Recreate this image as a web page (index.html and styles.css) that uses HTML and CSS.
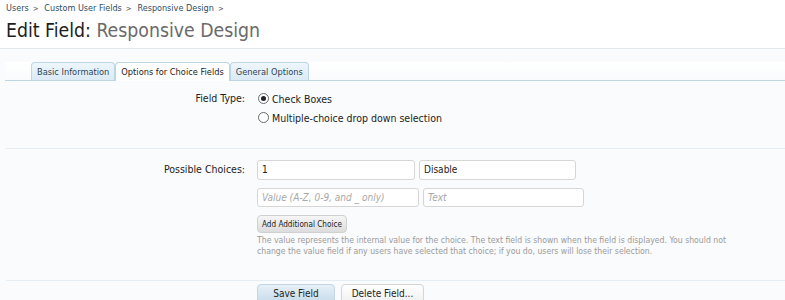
FILE: index.html
```html
<!DOCTYPE html>
<html>
<head>
<meta charset="utf-8">
<link rel="stylesheet" href="styles.css">
</head>
<body>
<div class="crumbs">
  <a href="#">Users</a><span class="sep">&gt;</span><a href="#">Custom User Fields</a><span class="sep">&gt;</span><a href="#">Responsive Design</a><span class="sep">&gt;</span>
</div>
<h1 class="title"><span class="t-main">Edit Field:</span> <span class="t-sub">Responsive Design</span></h1>
<div class="tabs">
  <div class="tab">Basic Information</div>
  <div class="tab active">Options for Choice Fields</div>
  <div class="tab">General Options</div>
</div>
<div class="form">
  <div class="row row-type">
    <div class="label">Field Type:</div>
    <div class="ctrl">
      <div class="radio-line"><span class="radio checked"></span><span>Check Boxes</span></div>
      <div class="radio-line"><span class="radio"></span><span>Multiple-choice drop down selection</span></div>
    </div>
  </div>
  <div class="row row-choices">
    <div class="label">Possible Choices:</div>
    <div class="ctrl">
      <div class="inputs">
        <div class="input w1">1</div>
        <div class="input w2">Disable</div>
      </div>
      <div class="inputs">
        <div class="input w3 ph">Value (A-Z, 0-9, and _ only)</div>
        <div class="input w4 ph">Text</div>
      </div>
      <div class="small-btn">Add Additional Choice</div>
      <p class="explain">The value represents the internal value for the choice. The text field is shown when the field is displayed. You should not change the value field if any users have selected that choice; if you do, users will lose their selection.</p>
    </div>
  </div>
  <div class="row row-submit">
    <div class="label"></div>
    <div class="ctrl buttons">
      <div class="btn primary">Save Field</div>
      <div class="btn">Delete Field...</div>
    </div>
  </div>
</div>
</body>
</html>
```
FILE: styles.css
```css
html, body {
  margin: 0;
  padding: 0;
  background: #fafbfd;
}
body {
  font-family: "DejaVu Sans Condensed", "DejaVu Sans", sans-serif;
  font-size: 10px;
  color: #222;
  width: 785px;
  height: 300px;
  overflow: hidden;
}
.crumbs {
  background: #fff;
  padding: 2px 6px 0;
  height: 13px;
  line-height: 12px;
  font-size: 9px;
}
.crumbs a {
  color: #2d4e66;
  text-decoration: none;
}
.crumbs .sep {
  color: #555;
  margin: 0 6px 0 4px;
  font-size: 7.5px;
}
.title {
  margin: 0;
  background: #fff;
  padding: 4px 6px 0;
  height: 29px;
  font-size: 19.3px;
  line-height: 24px;
  font-weight: normal;
  border-bottom: 1px solid #e3e8ec;
}
.t-main { color: #1d1d1d; }
.t-sub { color: #6a6a6a; }
.tabs {
  display: flex;
  padding-left: 26px;
  margin: 13px 0 0 5px;
  height: 18px;
  border-bottom: 1px solid #bcd6e6;
  background: linear-gradient(#fff, #fafbfd);
}
.tab {
  height: 17px;
  line-height: 17px;
  padding: 0 5px;
  font-size: 9.2px;
  color: #2b4558;
  background: linear-gradient(#eef6fc, #dbeaf5);
  border: 1px solid #bcd6e6;
  border-bottom: none;
  border-radius: 4px 4px 0 0;
}
.tab.active {
  background: #fff;
  color: #222;
  height: 18px;
  margin-bottom: -1px;
}
.row {
  display: grid;
  margin-left: 6px;
  grid-template-columns: 239px 1fr;
  column-gap: 12px;
}
.label {
  text-align: right;
  color: #222;
  font-size: 10.5px;
}
.row-type {
  padding-top: 8px;
  height: 59px;
  border-bottom: 1px solid #e4edf2;
}
.row-type .label {
  line-height: 18px;
}
.radio-line {
  display: flex;
  align-items: center;
  height: 19px;
  font-size: 10.5px;
  color: #222;
}
.radio {
  width: 9px;
  height: 9px;
  border: 1px solid #6b6b6b;
  border-radius: 50%;
  margin-right: 3px;
  margin-left: 1px;
  background: #fff;
  position: relative;
  box-sizing: content-box;
}
.radio.checked::after {
  content: "";
  position: absolute;
  left: 2px;
  top: 2px;
  width: 5px;
  height: 5px;
  border-radius: 50%;
  background: #222;
}
.row-choices {
  padding-top: 11px;
  height: 120px;
  border-bottom: 1px solid #e4edf2;
}
.row-choices .label {
  line-height: 17px;
  padding-top: 1px;
}
.inputs {
  display: flex;
  gap: 4px;
  margin-bottom: 8px;
}
.input {
  height: 18px;
  line-height: 18px;
  border: 1px solid #d6d6d6;
  border-radius: 3px;
  background: #fff;
  padding: 0 4px;
  font-size: 10px;
  color: #222;
  box-sizing: content-box;
}
.inputs + .inputs .input {
  height: 17px;
  line-height: 17px;
}
.w1 { width: 148px; }
.w2 { width: 147px; }
.w3 { width: 152px; }
.w4 { width: 151px; }
.input.ph {
  color: #a8a8a8;
  font-style: italic;
}
.small-btn {
  display: inline-block;
  height: 16px;
  line-height: 16px;
  padding: 0 4px;
  font-size: 8.1px;
  color: #222;
  background: linear-gradient(#f6f6f6, #dcdcdc);
  border: 1px solid #d0d0d0;
  border-radius: 4px;
}
.explain {
  margin: 2px 0 0;
  font-size: 8.65px;
  line-height: 11px;
  color: #9a9a9a;
  width: 490px;
}
.row-submit {
  padding-top: 3px;
}
.buttons {
  display: flex;
  gap: 6px;
}
.btn {
  width: 76px;
  height: 18px;
  line-height: 18px;
  text-align: center;
  font-size: 10px;
  color: #222;
  border: 1px solid #d5d5d5;
  border-radius: 4px 4px 0 0;
  background: linear-gradient(#fff, #f0f0f0);
}
.btn.primary {
  background: linear-gradient(#e6f0f7, #c6dbea);
  border-color: #c4d6e4;
}
.btn + .btn {
  width: 81px;
}
```
